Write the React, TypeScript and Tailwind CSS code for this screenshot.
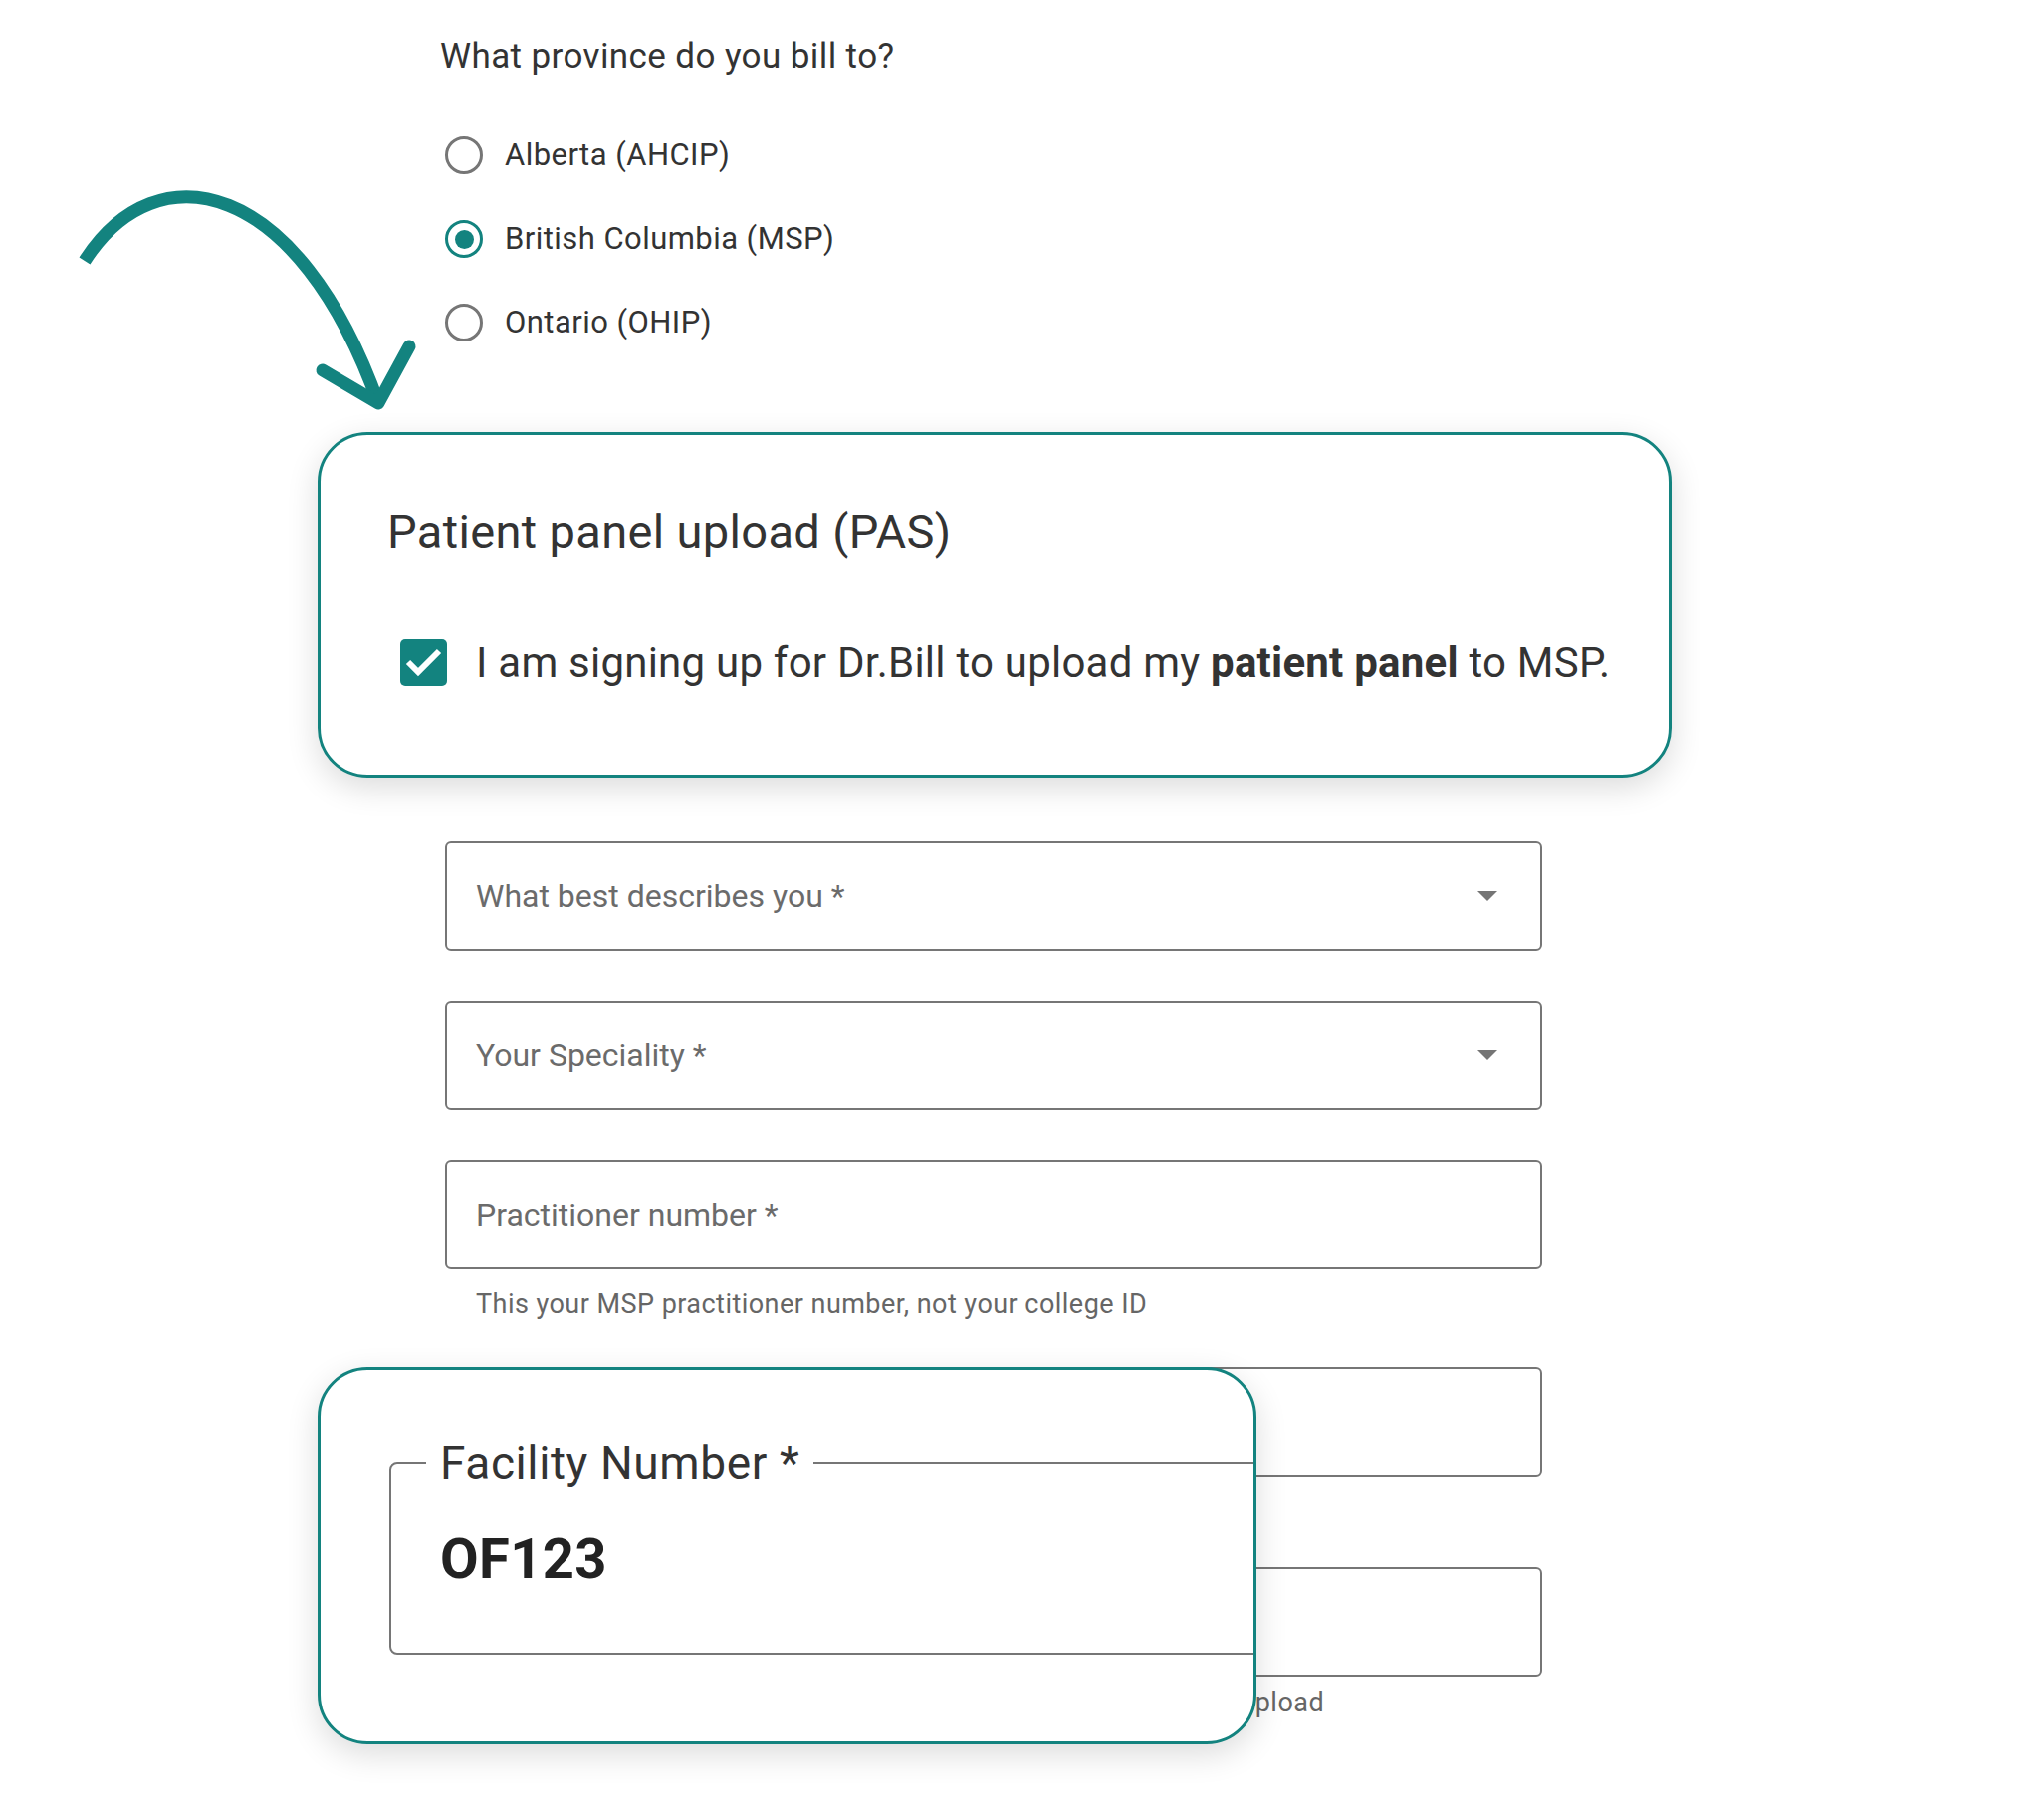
import React from 'react';

const provinces = [
  { label: 'Alberta (AHCIP)', checked: false },
  { label: 'British Columbia (MSP)', checked: true },
  { label: 'Ontario (OHIP)', checked: false },
];

const RadioRow: React.FC<{ label: string; checked: boolean }> = ({ label, checked }) => (
  <div className="flex h-[84px] items-center">
    <span
      className={
        checked
          ? 'flex h-[38px] w-[38px] items-center justify-center rounded-full border-[3.5px] border-[#13837f]'
          : 'flex h-[38px] w-[38px] items-center justify-center rounded-full border-[3.5px] border-[#767676]'
      }
    >
      {checked && <span className="h-[19px] w-[19px] rounded-full bg-[#13837f]" />}
    </span>
    <span className="ml-[22px] text-[31px] leading-[38px] tracking-[0.45px] text-[#333]">{label}</span>
  </div>
);

const SelectField: React.FC<{ placeholder: string; className?: string }> = ({ placeholder, className }) => (
  <div className={`flex h-[110px] items-center justify-between rounded-[6px] border-2 border-[#767676] pl-[29px] pr-[43px] ${className ?? ''}`}>
    <span className="text-[32px] leading-[40px] text-[#6b6b6b]">{placeholder}</span>
    <svg width="20" height="10" viewBox="0 0 20 10">
      <polygon points="0,0 20,0 10,10" fill="#757575" />
    </svg>
  </div>
);

const TextField: React.FC<{ placeholder?: string; className?: string }> = ({ placeholder, className }) => (
  <div className={`flex h-[110px] items-center rounded-[6px] border-2 border-[#767676] pl-[29px] ${className ?? ''}`}>
    {placeholder && <span className="text-[32px] leading-[40px] text-[#6b6b6b]">{placeholder}</span>}
  </div>
);

const CurvedArrow = () => (
  <svg className="pointer-events-none absolute left-0 top-0" width="460" height="440" viewBox="0 0 460 440" fill="none">
    <path d="M85 262 C158 148 300 180 380 405" stroke="#13837f" strokeWidth="13" />
    <path d="M324 372 L380 405 L411 348" stroke="#13837f" strokeWidth="13" strokeLinecap="round" strokeLinejoin="round" />
  </svg>
);

const FacilityCallout = () => (
  <div className="absolute left-[319px] top-[1373px] h-[379px] w-[943px] overflow-hidden rounded-[50px] border-[3px] border-[#13837f] bg-white pt-[92px] pl-[69px] shadow-[0_10px_32px_rgba(0,0,0,0.14)]">
    <div className="relative h-[194px] w-[1000px] rounded-[8px] border-2 border-[#767676] pl-[49px] pt-[63px]">
      <span className="absolute left-[35px] -top-[27px] bg-white px-[14px] text-[46px] leading-[52px] tracking-[0.6px] text-[#333]">
        Facility Number *
      </span>
      <span className="block text-[56px] font-bold leading-[66px] tracking-[0.4px] text-[#222]">OF123</span>
    </div>
  </div>
);

export default function App() {
  return (
    <div className="relative min-h-[1828px] w-full overflow-hidden bg-white font-['Roboto',sans-serif] text-[#333]">
      <CurvedArrow />

      <main className="ml-[319px] w-[1360px] pt-[36px] pb-[80px]">
        <section className="ml-[128px]">
          <h2 className="-ml-[5px] text-[35px] font-normal leading-[42px] tracking-[0.4px] text-[#333]">What province do you bill to?</h2>
          <div className="mt-[36px]">
            {provinces.map((p) => (
              <RadioRow key={p.label} label={p.label} checked={p.checked} />
            ))}
          </div>
        </section>

        {/* zoomed callout of the PAS checkbox */}
        <section className="mt-[68px] rounded-[50px] border-[3px] border-[#13837f] bg-white pl-[67px] pt-[69px] pb-[89px] shadow-[0_10px_32px_rgba(0,0,0,0.14)]">
          <h3 className="text-[47px] font-normal leading-[56px] tracking-[0.35px] text-[#333]">Patient panel upload (PAS)</h3>
          <label className="ml-[13px] mt-[80px] flex h-[47px] items-center">
            <span className="flex h-[47px] w-[47px] items-center justify-center rounded-[5px] bg-[#13837f]">
              <svg width="47" height="47" viewBox="0 0 47 47" fill="none">
                <polyline points="8,23 18,33 39,12" stroke="#fff" strokeWidth="6" />
              </svg>
            </span>
            <span className="ml-[29px] text-[42px] leading-[50px] tracking-[0.23px] text-[#333]">
              I am signing up for Dr.Bill to upload my <strong className="font-bold">patient panel</strong> to MSP.
            </span>
          </label>
        </section>

        <section className="ml-[128px] w-[1102px] pt-[64px]">
          <SelectField placeholder="What best describes you *" />
          <SelectField placeholder="Your Speciality *" className="mt-[50px]" />
          <TextField placeholder="Practitioner number *" className="mt-[50px]" />
          <p className="mt-[19px] pl-[31px] text-[27px] leading-[32px] tracking-[0.46px] text-[#666]">
            This your MSP practitioner number, not your college ID
          </p>
          {/* these two sit under the facility callout */}
          <TextField className="mt-[47px]" />
          <TextField className="mt-[91px]" />
          <p className="mt-[10px] pl-[31px] text-[27px] leading-[32px] tracking-[0.46px] text-[#666]">
            This is the MSP facility number that will be used for the panel upload
          </p>
        </section>
      </main>

      <FacilityCallout />
    </div>
  );
}
